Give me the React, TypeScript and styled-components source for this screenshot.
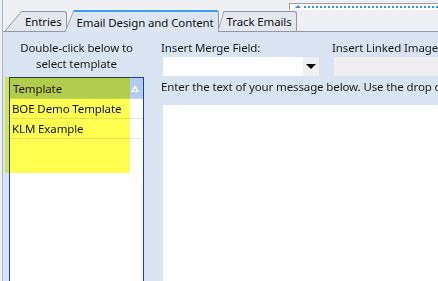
import styled, { createGlobalStyle } from "styled-components";

const GlobalStyle = createGlobalStyle`
  html, body {
    margin: 0;
    padding: 0;
    background: #f0f0f0;
  }
  body {
    font-family: "Segoe UI", "Noto Sans", sans-serif;
    font-size: 11.5px;
    letter-spacing: -0.12px;
    color: #1a1a1a;
  }
`;

const Window = styled.div`
  position: relative;
  width: 438px;
  height: 281px;
  overflow: hidden;
  padding-left: 2px;
  box-sizing: border-box;
  background: #f0f0f0;
`;

const Frame = styled.div`
  height: 100%;
  display: flex;
  flex-direction: column;
  border-left: 1px solid #a3b8d2;
`;

const TopStrip = styled.div`
  height: 10px;
  flex-shrink: 0;
  display: flex;
  justify-content: flex-end;
  background: #eef0f3;
`;

const ScrollMarker = styled.div`
  position: relative;
  margin-top: 3px;
  width: 149px;
  height: 7px;
  box-sizing: border-box;
  border: 1px solid #a0a0a0;
  border-right: none;
  border-bottom: none;
  background: #ffffff;

  &::before {
    content: "";
    position: absolute;
    left: 5px;
    top: 1px;
    border-left: 3px solid transparent;
    border-right: 3px solid transparent;
    border-bottom: 3px solid #2f8ff0;
  }

  &::after {
    content: "";
    position: absolute;
    left: 14px;
    right: 0;
    top: 2px;
    border-top: 2px dotted #3a95f0;
  }
`;

const TabStrip = styled.div`
  height: 21px;
  flex-shrink: 0;
  display: flex;
  align-items: flex-end;
  padding-left: 2px;
  background: #eef0f3;
`;

const Tab = styled.div<{ $active?: boolean; $slant: number; $gap: number }>`
  position: relative;
  z-index: ${(p) => (p.$active ? 2 : 1)};
  height: ${(p) => (p.$active ? 22 : 20)}px;
  margin-left: ${(p) => p.$gap}px;
  margin-bottom: ${(p) => (p.$active ? -1 : 0)}px;
  padding: 0 4px 0 3px;
  box-sizing: border-box;
  display: flex;
  align-items: center;
  white-space: nowrap;
  color: #111;
  background: ${(p) => (p.$active ? "#dce6f3" : "#e4e8ee")};
  border-top: ${(p) => (p.$active ? "2px solid #3d9bf0" : "1px solid #8f9aa7")};
  border-right: 1px solid #8f9aa7;
  border-top-right-radius: 3px;

  &::before {
    content: "";
    position: absolute;
    top: ${(p) => (p.$active ? -2 : -1)}px;
    bottom: 0;
    left: ${(p) => -p.$slant}px;
    width: ${(p) => p.$slant}px;
    background: linear-gradient(
      to bottom right,
      transparent calc(50% - 0.8px),
      #8f9aa7 50%,
      ${(p) => (p.$active ? "#dce6f3" : "#e4e8ee")} calc(50% + 0.8px)
    );
  }
`;

const Content = styled.div`
  flex: 1;
  min-height: 0;
  display: flex;
  background: #d8e4f2;
  border-top: 1px solid #8f9aa7;
`;

const LeftPanel = styled.div`
  width: 141px;
  flex-shrink: 0;
  display: flex;
  flex-direction: column;
  padding: 8px 0 0 6px;
  box-sizing: border-box;
`;

const Hint = styled.div`
  text-align: center;
  line-height: 16px;
`;

const Grid = styled.div`
  flex: 1;
  margin-top: 5px;
  display: flex;
  flex-direction: column;
  background: #ffffff;
  border: 1px solid #1d3fa6;
  border-bottom: none;
`;

const HeaderRow = styled.div`
  height: 20px;
  flex-shrink: 0;
  display: flex;
  align-items: center;
  justify-content: space-between;
  padding: 0 4px 0 3px;
  background: #b0cdf0;
  border-bottom: 1px solid #c8d8ec;
  color: #2a1010;
`;

const SortGlyph = styled.span`
  position: relative;
  width: 0;
  height: 0;
  border-left: 4px solid transparent;
  border-right: 4px solid transparent;
  border-bottom: 7px solid #ffffff;

  &::after {
    content: "";
    position: absolute;
    left: -2px;
    top: 3px;
    border-left: 2px solid transparent;
    border-right: 2px solid transparent;
    border-bottom: 3px solid #b0cdf0;
  }
`;

const Row = styled.div`
  height: 20px;
  flex-shrink: 0;
  display: flex;
  align-items: center;
  padding-left: 2px;
  box-sizing: border-box;
  border-bottom: 1px solid #e4e4e4;
  color: #111;
`;

const RightPanel = styled.div`
  flex: 1;
  min-width: 0;
  display: flex;
  flex-direction: column;
  padding: 8px 0 0 17px;
`;

const FieldRow = styled.div`
  display: flex;
`;

const FieldGroup = styled.div<{ $width?: number }>`
  display: flex;
  flex-direction: column;
  flex-shrink: 0;
  width: ${(p) => (p.$width ? `${p.$width}px` : "auto")};
`;

const Label = styled.div`
  line-height: 16px;
  white-space: nowrap;
`;

const Combo = styled.div`
  margin: 1px 0 0 2px;
  width: 156px;
  height: 19px;
  display: flex;
  justify-content: flex-end;
  background: #ffffff;
`;

const DropButton = styled.div`
  width: 16px;
  display: flex;
  align-items: center;
  justify-content: center;
  background: #f0f0f0;

  &::after {
    content: "";
    border-left: 5px solid transparent;
    border-right: 5px solid transparent;
    border-top: 5px solid #000000;
  }
`;

const DisabledInput = styled.div`
  margin: 1px 0 0 2px;
  width: 140px;
  height: 19px;
  background: #efefef;
`;

const Instruction = styled.div`
  margin-top: 3px;
  line-height: 16px;
  white-space: nowrap;
`;

const MessageArea = styled.div`
  flex: 1;
  margin: 10px 0 0 2px;
  background: #ffffff;
`;

const Highlight = styled.div`
  position: absolute;
  left: 5px;
  top: 77px;
  width: 125px;
  height: 96px;
  background: #ffff52;
  mix-blend-mode: multiply;
  pointer-events: none;
`;

const templates = ["BOE Demo Template", "KLM Example"];

export default function App() {
  return (
    <>
      <GlobalStyle />
      <Window>
        <Frame>
          <TopStrip>
            <ScrollMarker />
          </TopStrip>
          <TabStrip>
            <Tab $slant={17} $gap={17}>
              Entries
            </Tab>
            <Tab $active $slant={9} $gap={7}>
              Email Design and Content
            </Tab>
            <Tab $slant={6} $gap={5}>
              Track Emails
            </Tab>
          </TabStrip>
          <Content>
            <LeftPanel>
              <Hint>
                Double-click below to
                <br />
                select template
              </Hint>
              <Grid>
                <HeaderRow>
                  <span>Template</span>
                  <SortGlyph />
                </HeaderRow>
                {templates.map((name) => (
                  <Row key={name}>{name}</Row>
                ))}
              </Grid>
            </LeftPanel>
            <RightPanel>
              <FieldRow>
                <FieldGroup $width={171}>
                  <Label>Insert Merge Field:</Label>
                  <Combo>
                    <DropButton />
                  </Combo>
                </FieldGroup>
                <FieldGroup>
                  <Label>Insert Linked Image:</Label>
                  <DisabledInput />
                </FieldGroup>
              </FieldRow>
              <Instruction>
                Enter the text of your message below. Use the drop down lists
                above to insert merge fields.
              </Instruction>
              <MessageArea />
            </RightPanel>
          </Content>
        </Frame>
        <Highlight />
      </Window>
    </>
  );
}
